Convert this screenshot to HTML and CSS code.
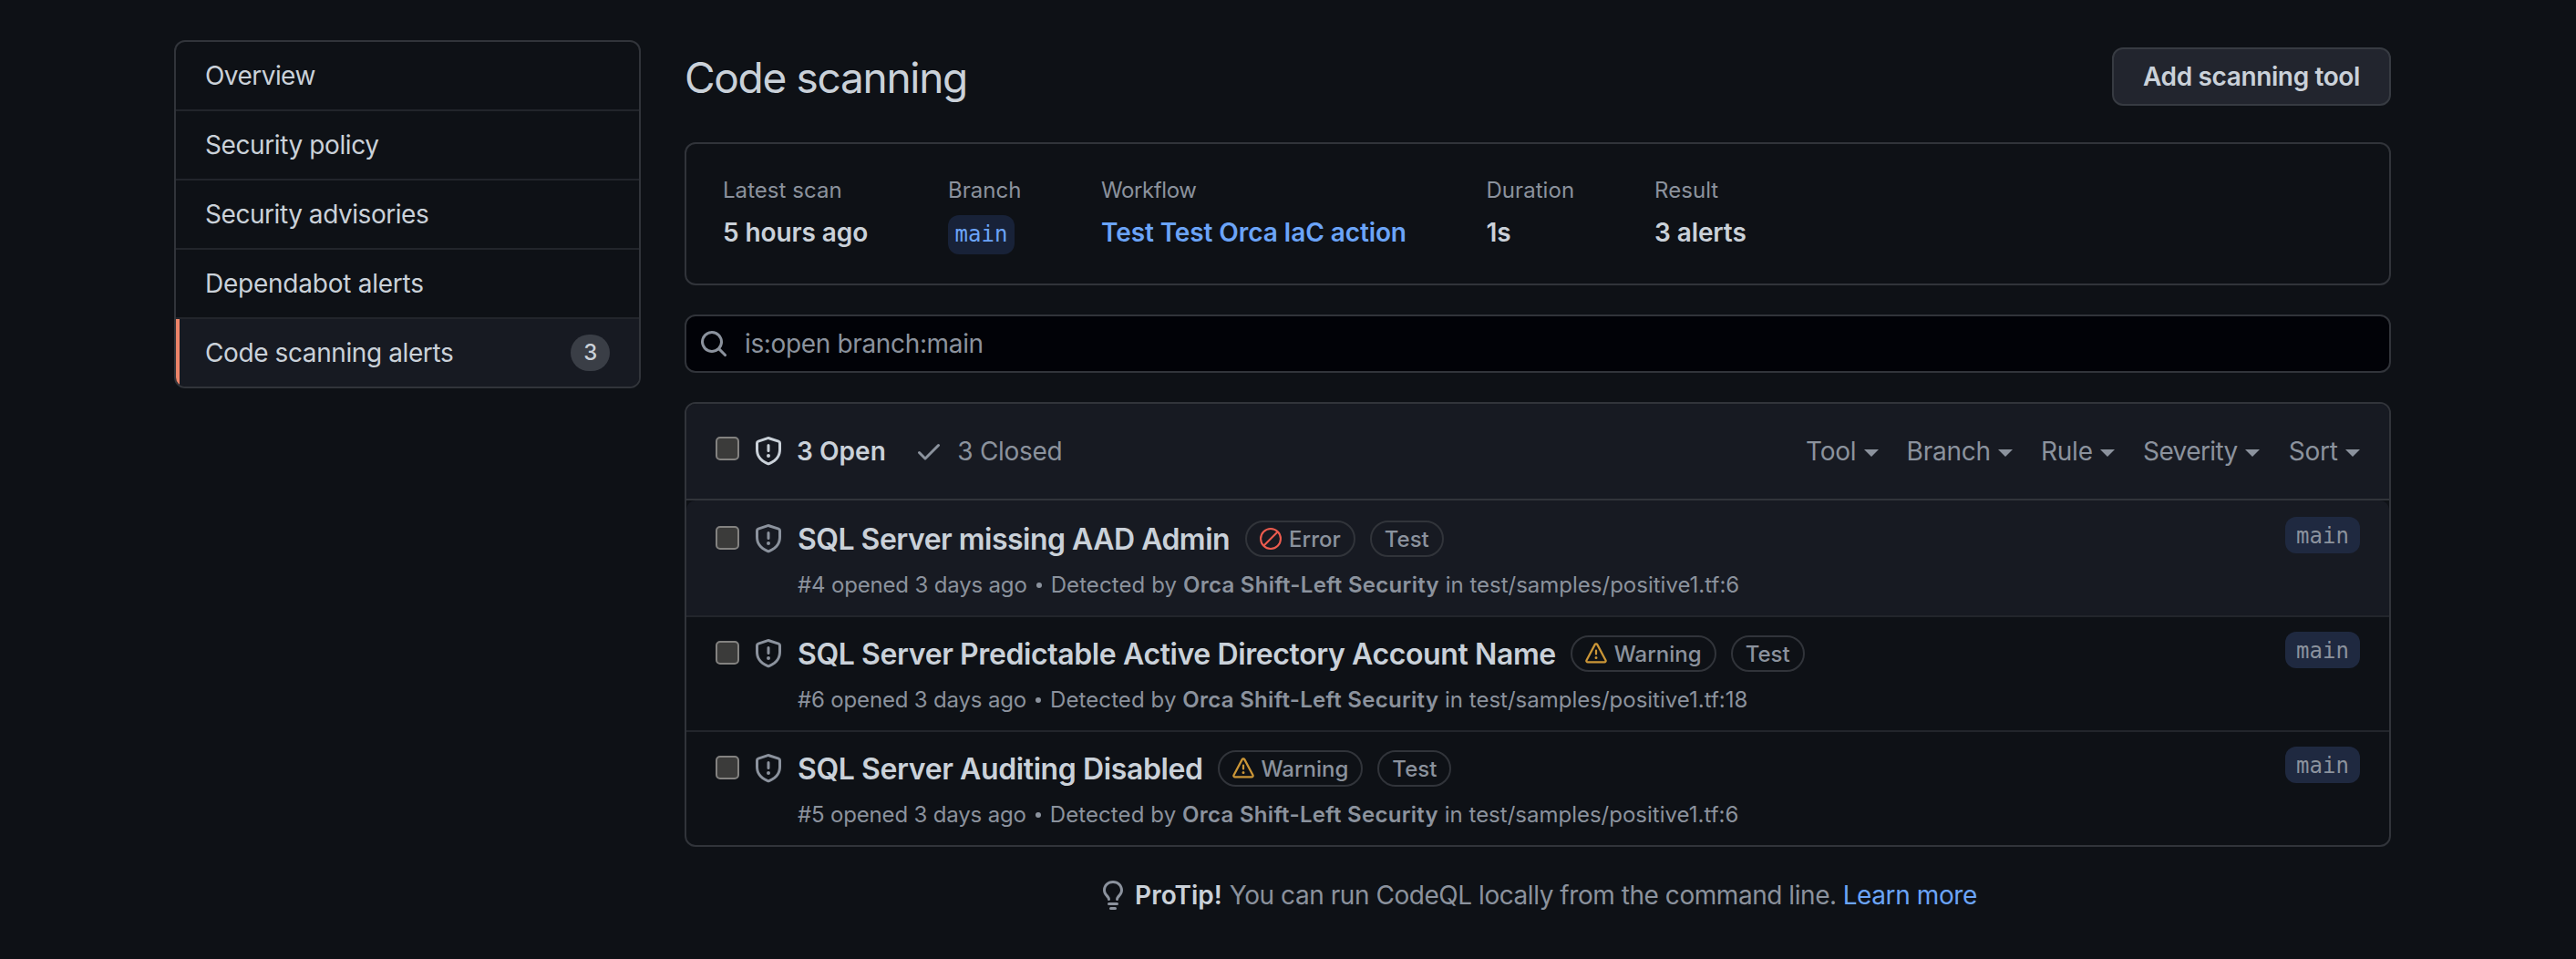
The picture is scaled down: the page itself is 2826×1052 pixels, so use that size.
FILE: index.html
```html
<!DOCTYPE html>
<html lang="en">
<head>
<meta charset="utf-8">
<title>Code scanning</title>
<link rel="stylesheet" href="styles.css">
</head>
<body>
<svg class="sprite" aria-hidden="true">
  <symbol id="shield" viewBox="0 0 16 16"><path fill-rule="evenodd" d="M7.467.133a1.75 1.75 0 011.066 0l5.25 1.68A1.75 1.75 0 0115 3.48V7c0 1.566-.32 3.182-1.303 4.682-.983 1.498-2.585 2.813-5.032 3.855a1.7 1.7 0 01-1.33 0c-2.447-1.042-4.049-2.357-5.032-3.855C1.32 10.182 1 8.566 1 7V3.48a1.75 1.75 0 011.217-1.667l5.25-1.68zm.61 1.429a.25.25 0 00-.153 0l-5.25 1.68a.25.25 0 00-.174.238V7c0 1.358.275 2.666 1.057 3.86.784 1.194 2.121 2.34 4.366 3.297a.2.2 0 00.154 0c2.245-.956 3.582-2.104 4.366-3.298C13.225 9.666 13.5 8.36 13.5 7V3.48a.25.25 0 00-.174-.237l-5.25-1.68zM9 10.5a1 1 0 11-2 0 1 1 0 012 0zm-.25-5.75a.75.75 0 10-1.5 0v3a.75.75 0 001.5 0v-3z"/></symbol>
  <symbol id="check" viewBox="0 0 16 16"><path fill-rule="evenodd" d="M13.78 4.22a.75.75 0 010 1.06l-7.25 7.25a.75.75 0 01-1.06 0L2.22 9.28a.75.75 0 011.06-1.06L6 10.94l6.72-6.72a.75.75 0 011.06 0z"/></symbol>
  <symbol id="search" viewBox="0 0 16 16"><path fill-rule="evenodd" d="M11.5 7a4.499 4.499 0 11-8.998 0A4.499 4.499 0 0111.5 7zm-.82 4.74a6 6 0 111.06-1.06l3.04 3.04a.75.75 0 11-1.06 1.06l-3.04-3.04z"/></symbol>
  <symbol id="bulb" viewBox="0 0 16 16"><path fill-rule="evenodd" d="M8 1.5c-2.363 0-4 1.69-4 3.75 0 .984.424 1.625.984 2.304l.214.253c.223.264.47.556.673.848.284.411.537.896.621 1.49a.75.75 0 01-1.484.211c-.04-.282-.163-.547-.37-.847a8.695 8.695 0 00-.542-.68c-.084-.1-.173-.205-.268-.32C3.201 7.75 2.5 6.766 2.5 5.25 2.5 2.31 4.863 0 8 0s5.5 2.31 5.5 5.25c0 1.516-.701 2.5-1.328 3.259-.095.115-.184.22-.268.319-.207.245-.383.453-.541.681-.208.3-.33.565-.37.847a.75.75 0 01-1.485-.212c.084-.593.337-1.078.621-1.489.203-.292.45-.584.673-.848.075-.088.147-.173.213-.253.561-.679.985-1.32.985-2.304 0-2.06-1.637-3.75-4-3.75zM6 15.25a.75.75 0 01.75-.75h2.5a.75.75 0 010 1.5h-2.5a.75.75 0 01-.75-.75zM5.75 12a.75.75 0 000 1.5h4.5a.75.75 0 000-1.5h-4.5z"/></symbol>
  <symbol id="slash" viewBox="0 0 16 16"><path d="M13 3L3 13" fill="none" stroke="currentColor" stroke-width="1.4"/><circle cx="8" cy="8" r="7.3" fill="none" stroke="currentColor" stroke-width="1.4"/></symbol>
  <symbol id="alert" viewBox="0 0 16 16"><path fill-rule="evenodd" d="M8.22 1.754a.25.25 0 00-.44 0L1.698 13.132a.25.25 0 00.22.368h12.164a.25.25 0 00.22-.368L8.22 1.754zm-1.763-.707c.659-1.234 2.427-1.234 3.086 0l6.082 11.378A1.75 1.75 0 0114.082 15H1.918a1.75 1.75 0 01-1.543-2.575L6.457 1.047zM9 11a1 1 0 11-2 0 1 1 0 012 0zm-.25-5.25a.75.75 0 00-1.5 0v2.5a.75.75 0 001.5 0v-2.5z"/></symbol>
</svg>
<div class="page">
  <nav class="menu">
    <a class="menu-item tight">Overview</a>
    <a class="menu-item">Security policy</a>
    <a class="menu-item advisories">Security advisories</a>
    <a class="menu-item loose">Dependabot alerts</a>
    <a class="menu-item selected">Code scanning alerts<span class="counter">3</span></a>
  </nav>
  <main class="main">
    <header class="head">
      <h1 class="title">Code scanning</h1>
      <button class="btn">Add scanning tool</button>
    </header>
    <section class="stats">
      <div class="stat"><div class="label">Latest scan</div><div class="value">5 hours ago</div></div>
      <div class="stat"><div class="label">Branch</div><a class="branch-link">main</a></div>
      <div class="stat"><div class="label narrow">Workflow</div><a class="value link">Test Test Orca IaC action</a></div>
      <div class="stat"><div class="label">Duration</div><div class="value">1s</div></div>
      <div class="stat"><div class="label">Result</div><div class="value">3 alerts</div></div>
    </section>
    <div class="search"><svg class="icon"><use href="#search"/></svg><span class="query">is:open branch:main</span></div>
    <section class="list">
      <div class="list-head">
        <span class="box"></span>
        <svg class="icon open-icon"><use href="#shield"/></svg>
        <a class="open">3 Open</a>
        <svg class="icon check-icon"><use href="#check"/></svg>
        <a class="closed">3 Closed</a>
        <div class="filters">
          <a class="filter">Tool</a>
          <a class="filter">Branch</a>
          <a class="filter">Rule</a>
          <a class="filter severity">Severity</a>
          <a class="filter">Sort</a>
        </div>
      </div>
      <article class="row hovered">
        <span class="box"></span>
        <svg class="icon"><use href="#shield"/></svg>
        <div class="body">
          <div class="line"><a class="name tight">SQL Server missing AAD Admin</a><span class="pill"><svg class="sev error"><use href="#slash"/></svg>Error</span><span class="pill">Test</span></div>
          <div class="meta"><span class="opened">#4 opened 3 days ago</span><i class="dot"></i><span class="by">Detected by</span> <b>Orca Shift-Left Security</b> in test/samples/positive1.tf:6</div>
        </div>
        <span class="branch">main</span>
      </article>
      <article class="row">
        <span class="box"></span>
        <svg class="icon"><use href="#shield"/></svg>
        <div class="body">
          <div class="line"><a class="name">SQL Server Predictable Active Directory Account Name</a><span class="pill"><svg class="sev warning"><use href="#alert"/></svg>Warning</span><span class="pill">Test</span></div>
          <div class="meta"><span class="opened">#6 opened 3 days ago</span><i class="dot"></i><span class="by">Detected by</span> <b>Orca Shift-Left Security</b> in test/samples/positive1.tf:18</div>
        </div>
        <span class="branch">main</span>
      </article>
      <article class="row">
        <span class="box"></span>
        <svg class="icon"><use href="#shield"/></svg>
        <div class="body">
          <div class="line"><a class="name">SQL Server Auditing Disabled</a><span class="pill"><svg class="sev warning"><use href="#alert"/></svg>Warning</span><span class="pill">Test</span></div>
          <div class="meta"><span class="opened">#5 opened 3 days ago</span><i class="dot"></i><span class="by">Detected by</span> <b>Orca Shift-Left Security</b> in test/samples/positive1.tf:6</div>
        </div>
        <span class="branch">main</span>
      </article>
    </section>
    <footer class="tip"><svg class="icon"><use href="#bulb"/></svg><strong>ProTip!</strong><span class="tip-text">You can run CodeQL locally from the command line.</span><a class="more">Learn more</a></footer>
  </main>
</div>
</body>
</html>
```
FILE: styles.css
```css
:root {
  --bg: #0e1116;
  --subtle: #171a22;
  --border: #31343a;
  --border-muted: #22252b;
  --text: #cad1d9;
  --muted: #8b929d;
  --link: #6ba4f8;
}
* { box-sizing: border-box; }
body {
  margin: 0;
  background: var(--bg);
  color: var(--text);
  font: 400 28px/42px Inter, sans-serif;
}
.sprite { display: none; }
.page {
  display: flex;
  align-items: flex-start;
  gap: 48px;
  width: 2623px;
  padding-left: 191px;
}
.icon { width: 32px; height: 32px; flex: none; fill: var(--muted); }

/* Side menu */
.menu {
  flex: none;
  width: 512px;
  margin-top: 44px;
  border: 2px solid var(--border);
  border-radius: 12px;
  overflow: hidden;
}
.menu-item {
  display: flex;
  align-items: center;
  justify-content: space-between;
  height: 76px;
  padding: 0 32px;
  border-bottom: 2px solid var(--border-muted);
  letter-spacing: -0.4px;
}
.menu-item.tight { letter-spacing: -0.55px; }
.menu-item.advisories { letter-spacing: -0.45px; }
.menu-item.loose { letter-spacing: -0.24px; }
.menu-item.selected {
  height: 74px;
  border-bottom: 0;
  background: var(--subtle);
  box-shadow: inset 4px 0 #ec8469;
}
.counter {
  width: 43px;
  height: 40px;
  border-radius: 20px;
  background: #3a3e46;
  text-align: center;
  font-size: 24px;
  font-weight: 500;
  line-height: 40px;
}

/* Page header */
.main { flex: 1; padding-top: 52px; }
.head { display: flex; align-items: center; justify-content: space-between; height: 64px; }
.title { margin: 2px 0 0; font-size: 46px; font-weight: 400; letter-spacing: -1.3px; }
.btn {
  width: 306px;
  height: 64px;
  padding: 0;
  border: 2px solid #373b42;
  border-radius: 12px;
  background: #22252e;
  color: var(--text);
  font: 600 28px/60px Inter, sans-serif;
  letter-spacing: -0.37px;
}

/* Latest scan summary */
.stats {
  display: grid;
  grid-template-columns: 247px 168px 422.5px 184.5px auto;
  height: 157px;
  margin-top: 40px;
  padding: 33px 40px 0;
  border: 2px solid var(--border);
  border-radius: 12px;
}
.label { margin-bottom: 7px; color: var(--muted); font-size: 24px; line-height: 36px; letter-spacing: 0.05px; }
.label.narrow { letter-spacing: -0.4px; }
.value { display: block; font-weight: 600; letter-spacing: -0.1px; }
.link { color: var(--link); }
.branch-link, .branch {
  display: block;
  border-radius: 12px;
  text-align: center;
  font-family: "DejaVu Sans Mono", monospace;
  font-size: 24px;
}
.branch-link { width: 73px; height: 43px; margin-top: 9px; background: #182238; color: var(--link); line-height: 43px; }

.search {
  display: flex;
  align-items: center;
  gap: 18px;
  height: 64px;
  margin-top: 32px;
  padding-left: 14px;
  border: 2px solid var(--border);
  border-radius: 12px;
  background: #010207;
  color: var(--muted);
  letter-spacing: -0.35px;
}

/* Alert list */
.list { margin-top: 32px; border: 2px solid var(--border); border-radius: 12px; }
.list-head {
  display: flex;
  align-items: center;
  height: 106px;
  padding: 0 32px;
  border-bottom: 2px solid var(--border);
  border-radius: 10px 10px 0 0;
  background: var(--subtle);
}
.box {
  flex: none;
  width: 26px;
  height: 26px;
  margin-right: 16px;
  border: 2px solid #838280;
  border-radius: 5px;
  background: #3b3b3a;
}
.list-head .box { margin-bottom: 6px; }
.open-icon { fill: var(--text); }
.open { margin-left: 15px; font-weight: 600; letter-spacing: 0.05px; }
.check-icon { margin: 0 15.5px 0 31px; }
.closed { color: var(--muted); letter-spacing: -0.3px; }
.filters { display: flex; gap: 31px; margin-left: auto; color: var(--muted); letter-spacing: -0.25px; }
.filter { display: flex; align-items: center; }
.filter.severity { margin: 0 0.8px 0 0; letter-spacing: -0.6px; }
.filter::after {
  content: "";
  margin: 4px 0 0 8.3px;
  border: 8px solid transparent;
  border-top-color: currentColor;
  border-bottom: 0;
}
.row { display: flex; height: 126px; padding: 20px 32px 0; border-top: 2px solid var(--border-muted); }
.row.hovered { padding-top: 22px; border-top: 0; border-radius: 10px 10px 0 0; background: var(--subtle); }
.row .box { margin-top: 6px; }
.row .icon { margin-top: 4px; }
.body { flex: 1; margin-left: 16px; }
.line { display: flex; align-items: center; gap: 16px; height: 40px; }
.name { padding-top: 2px; font-size: 32px; font-weight: 600; letter-spacing: -0.4px; }
.name.tight { margin-right: 1px; letter-spacing: -0.52px; }
.pill {
  display: flex;
  align-items: center;
  gap: 8px;
  height: 40px;
  padding: 2px 14px 0;
  border: 2px solid var(--border);
  border-radius: 20px;
  color: var(--muted);
  font-size: 24px;
  font-weight: 500;
}
.sev { width: 24px; height: 24px; margin-top: -2px; fill: currentColor; }
.error { color: #eb5b4e; }
.warning { color: #cb9637; }
.meta { margin-top: 13px; color: var(--muted); font-size: 24px; line-height: 36px; white-space: nowrap; letter-spacing: 0; }
.meta b { font-weight: 600; letter-spacing: 0.29px; }
.opened { letter-spacing: -0.17px; }
.by { letter-spacing: 0.1px; }
.dot { display: inline-block; width: 6px; height: 6px; margin: 0 10px; border-radius: 50%; background: currentColor; vertical-align: 5px; }
.branch { width: 82px; height: 40px; margin-top: -4px; background: #1f2940; color: var(--muted); line-height: 43px; }

.tip { display: flex; align-items: center; justify-content: center; margin-top: 32px; color: var(--muted); }
.tip strong { margin: 0 8px; color: var(--text); font-weight: 600; }
.tip-text { letter-spacing: -0.45px; }
.more { margin-left: 7px; color: var(--link); letter-spacing: -0.4px; }
```
